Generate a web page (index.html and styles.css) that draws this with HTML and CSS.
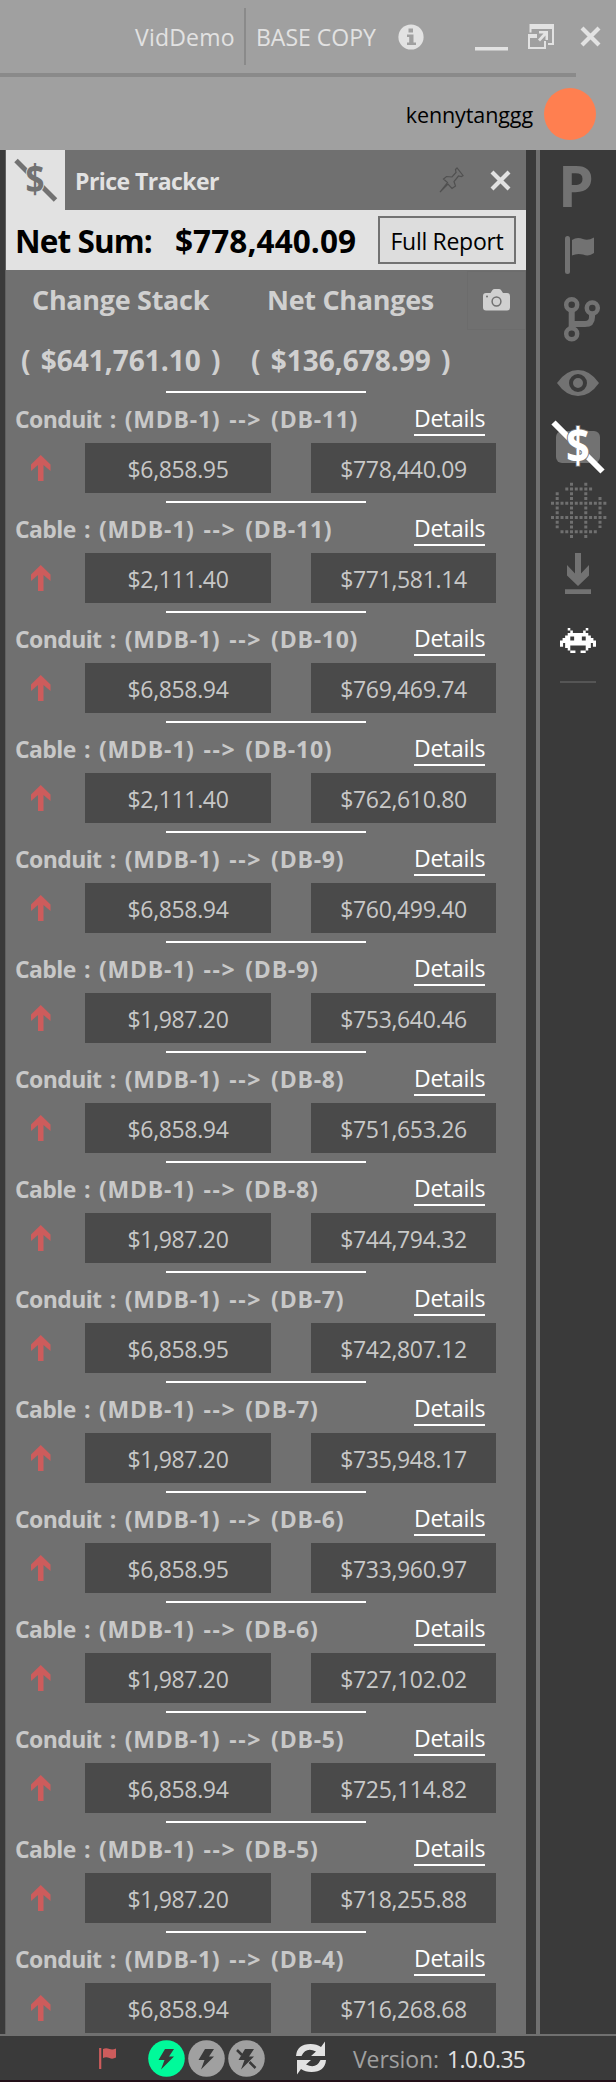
FILE: index.html
```html
<!DOCTYPE html>
<html lang="en">
<head>
<meta charset="utf-8">
<title>Price Tracker</title>
<link rel="stylesheet" href="styles.css">
</head>
<body>
<header class="top">
  <div class="titlebar">
    <span class="project">VidDemo</span>
    <span class="copy">BASE COPY</span>
    <svg class="info" width="26" height="26" viewBox="0 0 26 26"><circle cx="13" cy="13" r="12.6" fill="#e2e2e2"/><path d="M10.500 4.500h4.500v4h-4.500zM9 10.500h6.500v8H18V21H9v-2.500h2.200V13H9z" fill="#a0a0a0"/></svg>
    <svg class="minimize" width="33" height="4"><rect width="33" height="3.500" fill="#e2e2e2"/></svg>
    <svg class="restore" width="26" height="26" viewBox="0 0 26 26"><path d="M1.500 8.500V0H26v21h-6v-2h4V5H3.500v3.500z" fill="#e2e2e2"/><path d="M0 10h9v4H2v9h14v-6h2v8H0zM11 7h9v9h-2.500v-4.500l-5.500 6-2-2 5.500-6H11z" fill="#e2e2e2"/></svg>
    <svg class="window-close" width="21" height="21" viewBox="0 0 21 21"><path d="M2 2l17 17M19 2L2 19" stroke="#e2e2e2" stroke-width="4.200"/></svg>
  </div>
  <div class="rule"></div>
  <div class="user"><span>kennytanggg</span><i class="avatar"></i></div>
</header>
<main class="workspace">
  <section class="panel">
    <div class="panel-head">
      <div class="tab"><svg width="59" height="60" viewBox="0 0 59 60"><path d="M10 10.500L49.500 50" stroke="#727272" stroke-width="5"/><text transform="translate(29 43) scale(.85 1)" class="dollar dollar-tab">$</text></svg></div>
      <h1>Price Tracker</h1>
      <svg class="pin" width="25" height="26" viewBox="0 0 25 26"><path d="M1 25L8.500 15.500 4.500 12l3-2.500 5.500.5 4-4.500-.5-3L18 1l6 7.500-1.500 1-3-.5-4.500 5.500 1.500 4.500L13 21.500l-4-4.500z" fill="none" stroke="#505050" stroke-width="1.200"/></svg>
      <svg class="panel-close" width="21" height="21" viewBox="0 0 21 21"><path d="M2 2l17 17M19 2L2 19" stroke="#e2e2e2" stroke-width="4.200"/></svg>
    </div>
    <div class="sum"><b class="sum-label">Net Sum:</b><b class="sum-value">$778,440.09</b><button class="report">Full Report</button></div>
    <div class="stats">
      <b class="stack">Change Stack</b><b class="changes">Net Changes</b>
      <div class="snapshot"><svg width="27" height="22" viewBox="0 0 27 22"><path d="M3 4h4.500l2-3q.7-1 2-1h4.500q1.300 0 2 1l2 3H24q3 0 3 3v11.500q0 3-3 3H3q-3 0-3-3V7q0-3 3-3z" fill="#d0d0d0"/><circle cx="13.500" cy="12.500" r="4.400" fill="none" stroke="#707070" stroke-width="1.500"/><circle cx="4" cy="7.500" r="1" fill="#707070"/></svg></div>
    </div>
    <div class="amounts"><b>( $641,761.10 )</b><b>( $136,678.99 )</b></div>
    <div class="list" id="list"></div>
  </section>
  <nav class="rail">
    <span class="rail-letter">P</span>
    <svg width="76" height="70" viewBox="0 0 76 70"><path d="M27.500 18.500v33" stroke="#727272" stroke-width="5" stroke-linecap="round"/><path d="M32 20q5-3.500 11-1 5 2 11-1.500v15.500q-5 4-11 1.500-6-1.500-11 1z" fill="#727272"/></svg>
    <svg width="76" height="70" viewBox="0 0 76 70"><g fill="none" stroke="#727272"><circle cx="31.700" cy="14.700" r="5.500" stroke-width="4.500"/><circle cx="31.700" cy="43.700" r="5.500" stroke-width="4.500"/><circle cx="52.300" cy="18" r="5.500" stroke-width="4.500"/><path d="M31.700 21v17M52 24v3q0 7-7 7H32" stroke-width="6"/></g></svg>
    <svg width="76" height="46" viewBox="0 0 76 46"><path d="M17 23Q26 10 38 10T59 23Q50 36 38 36T17 23z" fill="#727272"/><circle cx="38" cy="23" r="7" fill="#727272" stroke="#3a3a3a" stroke-width="4"/></svg>
    <svg class="rail-price" width="76" height="70" viewBox="0 0 76 70"><rect x="16" y="25" width="44" height="32" rx="6" fill="#727272"/><path d="M13.500 16.500L62.500 65.500" stroke="#fff" stroke-width="6"/><text transform="translate(38 57) scale(.85 1)" class="dollar dollar-rail">$</text></svg>
    <svg width="76" height="64" viewBox="0 0 76 64"><g fill="none" stroke="#707070" stroke-width="3" stroke-dasharray="3 1.760"><path d="M31.500 6.700v57M45.800 6.700v57M17.200 16.200v36M60 21v31M11 27.200h56M11 41.500h56M25.300 12.900h27M20.500 55.800h37"/></g></svg>
    <svg width="76" height="70" viewBox="0 0 76 70"><path d="M35 13h6v20.500l8-8.500v10.500L38 46 27 35.500V25l8 8.500zM25 49.200h26v4.800H25z" fill="#727272"/></svg>
    <svg class="rail-alien" width="36" height="25" viewBox="0 0 14 10" preserveAspectRatio="none"><path fill="#fff" d="M3 0h1v1h1v1h4V1h1V0h1v1h-1v1h1v1h1v1h1v1h1v2.500h-1.200V6H12v2h-1v1h-1V7H4v2H3V8H2V6h-.8v1.500H0V5h1V4h1V3h1V2h1V1H3zM4 3.400V5h1.500V3.400zM8.500 3.400V5H10V3.400zM4 9h2v1H4zM8 9h2v1H8z" fill-rule="evenodd"/></svg>
    <i class="rail-rule"></i>
  </nav>
</main>
<footer class="status">
  <svg class="status-flag" width="18" height="23" viewBox="0 0 18 23"><path d="M1.200 1v21" stroke="#cd5c5c" stroke-width="2.200"/><path d="M4 2q3-1.500 6.500 0 3 1.200 6.500-.5v9q-3.500 2-6.500.5-3.500-1.500-6.500 0z" fill="#cd5c5c"/></svg>
  <div class="modes">
    <svg width="37" height="37" viewBox="0 0 37 37"><circle cx="18.500" cy="18.500" r="18.300" fill="#00fa9a"/><path d="M17 9h9l-5 7.500h5L13 29.500l3.500-9.500h-6z" fill="#3a3a3a"/></svg>
    <svg width="37" height="37" viewBox="0 0 37 37"><circle cx="18.500" cy="18.500" r="18.300" fill="#a0a0a0"/><path d="M17 9h9l-5 7.500h5L13 29.500l3.500-9.500h-6z" fill="#3a3a3a"/></svg>
    <svg width="37" height="37" viewBox="0 0 37 37"><circle cx="18.500" cy="18.500" r="18.300" fill="#a0a0a0"/><path d="M17 9h9l-5 7.500h5L13 29.500l3.500-9.500h-6z" fill="#3a3a3a"/><path d="M9 10l5 5M21.500 22l6 6" stroke="#3a3a3a" stroke-width="2.500"/></svg>
  </div>
  <svg class="refresh" width="30" height="34" viewBox="0 0 30 34"><path d="M0 15Q1 3 14.500 3q6.500 0 10.500 3l4-5.500V15H15l5-4.500Q10 5.500 5.500 15zM30 19Q29 31 15.500 31 9 31 5 28l-4 5.500V19h14l-5 4.500Q20 28.500 24.500 19z" fill="#e2e2e2"/></svg>
  <span class="version-label">Version:</span><span class="version">1.0.0.35</span>
</footer>
<script src="app.js"></script>
</body>
</html>
```

FILE: styles.css
```css
* { box-sizing: border-box; }
body { margin: 0; width: 616px; height: 2082px; display: flex; flex-direction: column; background: #3a3a3a; font-family: "Open Sans", "Noto Sans", sans-serif; font-size: 23px; white-space: nowrap; }
svg { display: block; flex: none; }
i { display: block; }
.top { height: 150px; flex: none; background: #a0a0a0; }
.titlebar { height: 73px; display: flex; align-items: center; color: #e2e2e2; }
.project { width: 246px; height: 57px; line-height: 59px; padding-left: 135px; border-right: 2px solid #8a8a8a; letter-spacing: .2px; }
.copy { width: 141px; padding: 1px 0 0 10px; }
.info { margin-left: 11px; }
.minimize { margin: 24px 0 0 51px; }
.restore { margin-left: 20px; }
.window-close { margin-left: 26px; }
.rule { width: 576px; height: 4px; background: #8a8a8a; }
.user { height: 73px; padding-right: 20px; display: flex; align-items: center; justify-content: flex-end; gap: 11px; font-size: 21.5px; letter-spacing: -.1px; color: #000; }
.user span { padding-top: 1px; }
.avatar { width: 52px; height: 52px; border-radius: 50%; background: #ff7f50; }
.workspace { height: 1884px; display: flex; flex: none; }
.panel { width: 521px; margin-left: 5px; border-left: 1px solid #606060; background: #707070; }
.panel-head { height: 60px; display: flex; align-items: center; }
.tab { width: 59px; background: #e2e2e2; }
.dollar { font-weight: 700; text-anchor: middle; }
.dollar-tab { font-size: 39px; fill: #727272; stroke: #e2e2e2; stroke-width: 2px; paint-order: stroke; }
.dollar-rail { font-size: 49px; fill: #fff; stroke: #727272; stroke-width: 2px; paint-order: stroke; }
.rail-price { overflow: visible; }
h1 { margin: 2px 0 0 10px; width: 364px; font-size: 23px; letter-spacing: -.55px; color: #e2e2e2; }
.panel-close { margin-left: 26px; }
.sum { height: 60px; display: flex; align-items: center; padding-left: 9px; background: #e2e2e2; color: #000; font-size: 31.5px; }
.sum-label { width: 160px; letter-spacing: -.9px; }
.sum-value { width: 203px; letter-spacing: .1px; }
.report { width: 138px; height: 48px; padding: 2px 0 0; border: 2px solid #727272; background: #ddd; color: #000; font: 23px "Open Sans", sans-serif; letter-spacing: -.3px; }
.stats { height: 60px; display: flex; align-items: center; color: #d0d0d0; font-size: 27px; letter-spacing: -.3px; }
.stats b { margin-top: -2px; }
.stack { width: 235px; padding-left: 26px; }
.changes { width: 226px; padding-left: 26px; }
.snapshot { width: 59px; height: 59px; display: flex; align-items: center; justify-content: center; border: 1px solid #6c6c6c; }
.amounts { height: 61px; display: flex; align-items: center; padding: 0 0 2px 15px; color: #d0d0d0; font-size: 28px; }
.amounts b { width: 230px; word-spacing: 3px; }
.entry { height: 110px; }
.entry:last-child { height: 102px; }
.divider { width: 200px; height: 2px; margin-left: 160px; background: #fff; }
.entry-head { height: 50px; display: flex; align-items: center; padding: 2px 0 0 9px; }
.entry-name { width: 399px; color: #c8c8c8; font-weight: 700; word-spacing: 3px; }
.kind { letter-spacing: -.6px; }
.code { letter-spacing: .75px; }
.link { letter-spacing: 1.6px; }
.details { width: 71px; height: 34px; line-height: 33px; color: #fff; border-bottom: 2px solid #fff; letter-spacing: -.3px; }
.entry-body { height: 50px; display: flex; align-items: center; padding-left: 25px; }
.arrow { margin-right: 34px; }
.cell { width: 186px; height: 50px; padding-top: 1px; line-height: 50px; text-align: center; background: #4a4a4a; color: #c8c8c8; letter-spacing: -.35px; }
.cell + .cell { width: 185px; margin-left: 40px; }
.rail { width: 80px; margin-left: 10px; border-left: 4px solid #707070; display: flex; flex-direction: column; }
.rail-letter { height: 70px; line-height: 71px; padding-left: 18px; font-size: 57px; font-weight: 700; color: #727272; }
.rail-alien { margin: 18px 0 0 20px; }
.rail-rule { width: 36px; height: 2px; margin: 28px 0 0 20px; background: #555; }
.status { height: 48px; flex: none; border-top: 2px solid #707070; border-bottom: 2px solid #220f18; display: flex; align-items: center; }
.status-flag { margin-left: 99px; }
.modes { display: flex; gap: 3px; margin-left: 31px; }
.refresh { margin-left: 31px; }
.version-label { margin-left: 27px; width: 94px; padding-top: 2px; color: #a0a0a0; letter-spacing: -.1px; }
.version { padding-top: 2px; color: #e2e2e2; letter-spacing: -.7px; }
```

FILE: app.js
```js
const entries = [
  ["Conduit", 11, "$6,858.95", "$778,440.09"],
  ["Cable", 11, "$2,111.40", "$771,581.14"],
  ["Conduit", 10, "$6,858.94", "$769,469.74"],
  ["Cable", 10, "$2,111.40", "$762,610.80"],
  ["Conduit", 9, "$6,858.94", "$760,499.40"],
  ["Cable", 9, "$1,987.20", "$753,640.46"],
  ["Conduit", 8, "$6,858.94", "$751,653.26"],
  ["Cable", 8, "$1,987.20", "$744,794.32"],
  ["Conduit", 7, "$6,858.95", "$742,807.12"],
  ["Cable", 7, "$1,987.20", "$735,948.17"],
  ["Conduit", 6, "$6,858.95", "$733,960.97"],
  ["Cable", 6, "$1,987.20", "$727,102.02"],
  ["Conduit", 5, "$6,858.94", "$725,114.82"],
  ["Cable", 5, "$1,987.20", "$718,255.88"],
  ["Conduit", 4, "$6,858.94", "$716,268.68"]
];
document.getElementById("list").innerHTML = entries.map(([kind, board, change, total]) => `
  <article class="entry">
    <div class="divider"></div>
    <div class="entry-head"><span class="entry-name"><span class="kind">${kind} :</span> <span class="code">(MDB-1)</span> <span class="link">--&gt;</span> <span class="code">(DB-${board})</span></span><span class="details">Details</span></div>
    <div class="entry-body">
      <svg class="arrow" width="20" height="26" viewBox="0 0 20 26"><path d="M0 9.500L9.700 0l9.800 9.500v6.500L12.500 10v16h-5.500V10L0 16z" fill="#cd5c5c"/></svg>
      <span class="cell">${change}</span><span class="cell">${total}</span>
    </div>
  </article>`).join("");
```
